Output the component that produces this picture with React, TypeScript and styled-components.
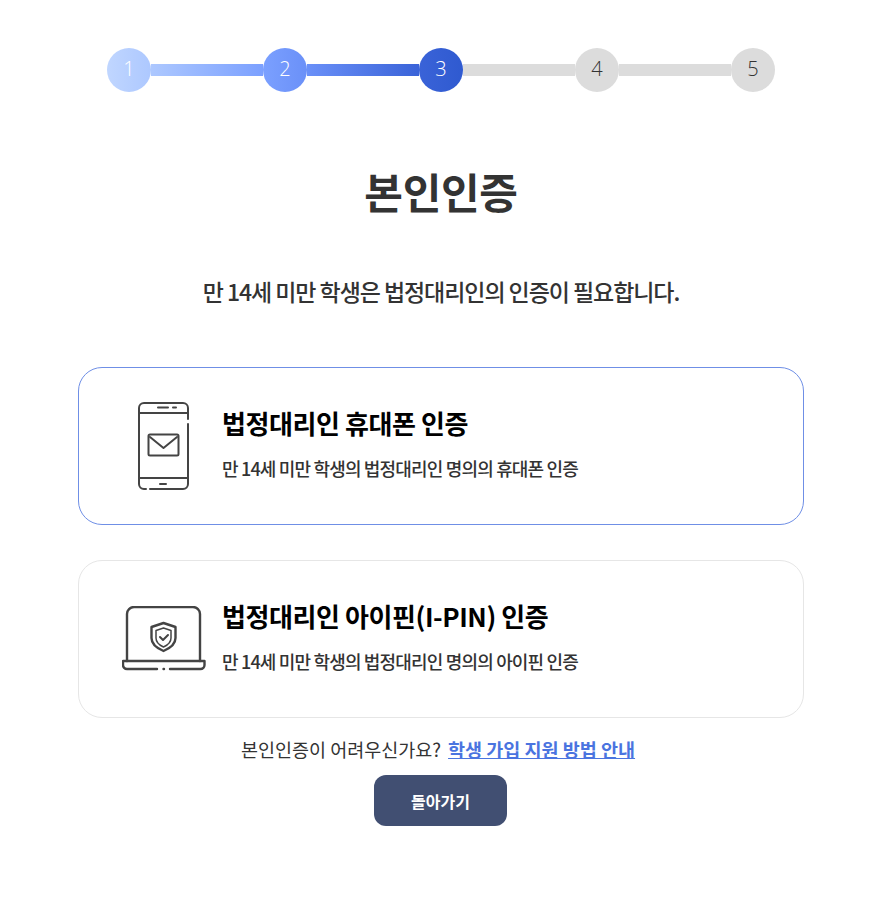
import { Fragment } from "react";
import styled, { createGlobalStyle } from "styled-components";

const GlobalStyle = createGlobalStyle`
  html, body {
    margin: 0;
    padding: 0;
    background: #fff;
    font-family: "Noto Sans CJK KR", "Noto Sans", sans-serif;
  }
`;

const Page = styled.main`
  display: flex;
  flex-direction: column;
  align-items: center;
  width: 726px;
  height: 900px;
  margin-left: 78px;
  padding-top: 48px;
  box-sizing: border-box;
`;

const Stepper = styled.ol`
  display: flex;
  align-items: center;
  list-style: none;
  margin: 0;
  padding: 0;
`;

const StepCircle = styled.li<{ $bg: string; $fg: string }>`
  flex: none;
  display: flex;
  align-items: center;
  justify-content: center;
  width: 44px;
  height: 44px;
  padding-bottom: 3px;
  box-sizing: border-box;
  border-radius: 50%;
  background: ${(p) => p.$bg};
  color: ${(p) => p.$fg};
  font-family: "Open Sans", sans-serif;
  font-size: 20px;
  font-weight: 300;
`;

const StepBar = styled.li<{ $bg: string }>`
  flex: none;
  width: 112px;
  height: 12px;
  background: ${(p) => p.$bg};
`;

const Title = styled.h1`
  margin: 71px 0 0;
  font-size: 42px;
  line-height: 56px;
  font-weight: 700;
  color: #333;
  letter-spacing: -0.3px;
`;

const Lead = styled.p`
  margin: 56px 0 0;
  font-size: 23px;
  line-height: 32px;
  font-weight: 500;
  color: #333;
  letter-spacing: -1.07px;
`;

const CardList = styled.div`
  width: 100%;
  margin-top: 60px;
`;

const Card = styled.a<{ $active?: boolean }>`
  display: flex;
  align-items: center;
  width: 100%;
  height: 158px;
  box-sizing: border-box;
  border: 1px solid ${(p) => (p.$active ? "#6f8fe6" : "#e6e6e6")};
  border-radius: 24px;
  background: #fff;
  margin-bottom: 35px;
`;

const IconSlot = styled.div`
  flex: none;
  display: flex;
  justify-content: center;
  width: 170px;
`;

const CardText = styled.div`
  display: flex;
  flex-direction: column;
  margin-left: -27px;
  padding-bottom: 5px;
`;

const CardTitle = styled.strong`
  font-size: 26px;
  line-height: 36px;
  font-weight: 700;
  color: #000;
  letter-spacing: -0.42px;
`;

const CardDesc = styled.span`
  margin-top: 14px;
  font-size: 18px;
  line-height: 27px;
  font-weight: 500;
  color: #333;
  letter-spacing: -0.83px;
`;

const Help = styled.p`
  display: flex;
  gap: 7px;
  margin: -18px 6px 0 0;
  font-size: 18.5px;
  line-height: 28px;
  color: #333;
`;

const HelpLink = styled.a`
  font-weight: 700;
  color: #4a74e0;
  text-decoration: underline;
`;

const BackButton = styled.button`
  width: 133px;
  height: 51px;
  margin: 12px 1px 0 0;
  border: 0;
  border-radius: 12px;
  background: #414f72;
  color: #fff;
  font-family: inherit;
  font-size: 16px;
  font-weight: 700;
`;

const stroke = {
  fill: "none",
  stroke: "#444",
  strokeWidth: 2,
  strokeLinecap: "round" as const,
  strokeLinejoin: "round" as const,
};

const PhoneIcon = () => (
  <svg width="52" height="88" viewBox="0 0 52 88" {...stroke}>
    <path d="M50 17V6a5 5 0 0 0-5-5H6a5 5 0 0 0-5 5v76a5 5 0 0 0 5 5h2M12 87h33a5 5 0 0 0 5-5V22" />
    <path d="M1 11h49M1 76h49" />
    <path d="M20 5.500h10M35 5.500h3M22 82h6" />
    <rect x="10.500" y="32.500" width="30" height="21" rx="1.500" />
    <path d="M12 35l13.500 11L39 35" />
  </svg>
);

const LaptopIcon = () => (
  <svg width="84" height="66" viewBox="0 0 84 66" {...stroke} strokeWidth="2.400">
    <path d="M5 55V8a7 7 0 0 1 7-7h59a7 7 0 0 1 7 7v47" />
    <path d="M35 63H5a4 4 0 0 1-4-4v-4h81.500v4a4 4 0 0 1-4 4H48" />
    <path d="M41.500 63h.5" />
    <path d="M41.500 17l12 4v11c0 6-5 10-12 13-7-3-12-7-12-13V21z" />
    <path d="M41.500 22l7.500 2.500V32c0 4-3 7-7.500 9-4.500-2-7.500-5-7.500-9v-7.500z" strokeWidth="1.500" />
    <path d="M38 31l3 3 5-5" strokeWidth="2" />
  </svg>
);

const steps = [
  { n: 1, bg: "linear-gradient(90deg, #c0d6ff, #adc8ff)", fg: "#fff" },
  { n: 2, bg: "linear-gradient(90deg, #7ba0ff, #6a90f8)", fg: "#fff" },
  { n: 3, bg: "linear-gradient(90deg, #3a63d8, #2f5ad0)", fg: "#fff" },
  { n: 4, bg: "#dcdcdc", fg: "#333" },
  { n: 5, bg: "#dcdcdc", fg: "#333" },
];

const bars = [
  "linear-gradient(90deg, #adc8ff, #7ba0ff)",
  "linear-gradient(90deg, #6a90f8, #3a63d8)",
  "#dcdcdc",
  "#dcdcdc",
];

export default function App() {
  return (
    <>
      <GlobalStyle />
      <Page>
        <Stepper>
          {steps.map((step, i) => (
            <Fragment key={step.n}>
              <StepCircle $bg={step.bg} $fg={step.fg}>
                {step.n}
              </StepCircle>
              {i < bars.length && <StepBar $bg={bars[i]} />}
            </Fragment>
          ))}
        </Stepper>
        <Title>본인인증</Title>
        <Lead>만 14세 미만 학생은 법정대리인의 인증이 필요합니다.</Lead>
        <CardList>
          <Card $active>
            <IconSlot>
              <PhoneIcon />
            </IconSlot>
            <CardText>
              <CardTitle>법정대리인 휴대폰 인증</CardTitle>
              <CardDesc>만 14세 미만 학생의 법정대리인 명의의 휴대폰 인증</CardDesc>
            </CardText>
          </Card>
          <Card>
            <IconSlot>
              <LaptopIcon />
            </IconSlot>
            <CardText>
              <CardTitle>법정대리인 아이핀(I-PIN) 인증</CardTitle>
              <CardDesc>만 14세 미만 학생의 법정대리인 명의의 아이핀 인증</CardDesc>
            </CardText>
          </Card>
        </CardList>
        <Help>
          본인인증이 어려우신가요?
          <HelpLink href="#">학생 가입 지원 방법 안내</HelpLink>
        </Help>
        <BackButton>돌아가기</BackButton>
      </Page>
    </>
  );
}
